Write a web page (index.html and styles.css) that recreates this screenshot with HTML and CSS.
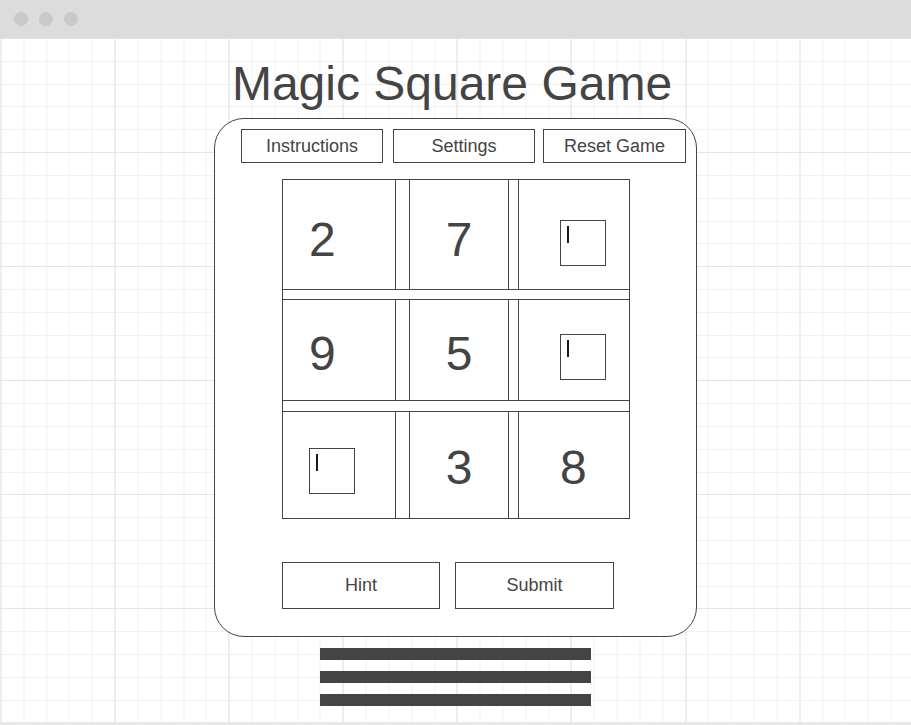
FILE: index.html
```html
<!DOCTYPE html>
<html lang="en">
<head>
<meta charset="utf-8">
<title>Magic Square Game</title>
<link rel="stylesheet" href="styles.css">
</head>
<body>
<div class="window">
  <div class="titlebar">
    <span class="dot"></span>
    <span class="dot"></span>
    <span class="dot"></span>
  </div>
  <div class="canvas">
    <h1 class="title">Magic Square Game</h1>
    <div class="panel">
      <div class="toolbar">
        <div class="btn btn-instructions">Instructions</div>
        <div class="btn btn-settings">Settings</div>
        <div class="btn btn-reset">Reset Game</div>
      </div>
      <div class="board">
        <div class="row row-1">
          <div class="cell cell-a"><span class="num">2</span></div>
          <div class="gap gap-a"></div>
          <div class="cell cell-b"><span class="num">7</span></div>
          <div class="gap gap-b"></div>
          <div class="cell cell-c"><span class="field"><span class="caret"></span></span></div>
        </div>
        <div class="row row-2">
          <div class="cell cell-a"><span class="num">9</span></div>
          <div class="gap gap-a"></div>
          <div class="cell cell-b"><span class="num">5</span></div>
          <div class="gap gap-b"></div>
          <div class="cell cell-c"><span class="field"><span class="caret"></span></span></div>
        </div>
        <div class="row row-3">
          <div class="cell cell-a"><span class="field"><span class="caret"></span></span></div>
          <div class="gap gap-a"></div>
          <div class="cell cell-b"><span class="num">3</span></div>
          <div class="gap gap-b"></div>
          <div class="cell cell-c"><span class="num">8</span></div>
        </div>
      </div>
      <div class="actions">
        <div class="btn btn-hint">Hint</div>
        <div class="btn btn-submit">Submit</div>
      </div>
    </div>
    <div class="menu-bars">
      <span class="bar"></span>
      <span class="bar"></span>
      <span class="bar"></span>
    </div>
  </div>
</div>
</body>
</html>
```

FILE: styles.css
```css
* {
  box-sizing: border-box;
}

html, body {
  margin: 0;
  padding: 0;
  background: #ffffff;
}

body {
  font-family: "Liberation Sans", Arial, sans-serif;
  color: #444444;
}

.window {
  width: 911px;
  height: 725px;
  display: flex;
  flex-direction: column;
  border-bottom: 3px solid #e8e8e8;
  overflow: hidden;
}

.titlebar {
  height: 38px;
  flex: 0 0 38px;
  background: #dcdcdc;
  display: flex;
  align-items: center;
  gap: 11px;
  padding-left: 14px;
}

.dot {
  width: 14px;
  height: 14px;
  border-radius: 50%;
  background: #c9c9c9;
}

.canvas {
  flex: 1;
  display: flex;
  flex-direction: column;
  align-items: center;
  background-color: #ffffff;
  background-image:
    repeating-linear-gradient(to right, #e4e4e4 0, #e4e4e4 1px, transparent 1px, transparent 114.1px),
    repeating-linear-gradient(to bottom, #e4e4e4 0, #e4e4e4 1px, transparent 1px, transparent 114.1px),
    repeating-linear-gradient(to right, #f1f1f1 0, #f1f1f1 1px, transparent 1px, transparent 22.82px),
    repeating-linear-gradient(to bottom, #f1f1f1 0, #f1f1f1 1px, transparent 1px, transparent 22.82px);
  background-position: 0.5px 0;
}

.title {
  margin: 18px 7px 7px 0;
  font-size: 48px;
  line-height: 55px;
  font-weight: normal;
  color: #444444;
}

.panel {
  width: 483px;
  border: 1px solid #444444;
  border-radius: 30px;
  background: #ffffff;
  padding: 10px 0 27px;
  display: flex;
  flex-direction: column;
}

.btn {
  border: 1px solid #444444;
  background: #ffffff;
  display: flex;
  align-items: center;
  justify-content: center;
  font-size: 18px;
  color: #444444;
}

.toolbar {
  display: flex;
  padding-left: 26px;
  height: 34px;
}

.btn-instructions {
  width: 142px;
  margin-right: 10px;
}

.btn-settings {
  width: 142px;
  margin-right: 8px;
}

.btn-reset {
  width: 143px;
}

.board {
  margin: 16px 0 0 67px;
  width: 348px;
  height: 340px;
  border: 1px solid #444444;
  display: flex;
  flex-direction: column;
}

.row {
  display: flex;
}

.row-1 {
  height: 110px;
  border-bottom: 1px solid #444444;
}

.row-2 {
  height: 102px;
  margin-top: 9px;
  border-top: 1px solid #444444;
  border-bottom: 1px solid #444444;
}

.row-3 {
  height: 107px;
  margin-top: 10px;
  border-top: 1px solid #444444;
}

.cell {
  display: flex;
  align-items: flex-start;
}

.row-1 .cell { padding-top: 36px; }
.row-2 .cell { padding-top: 30px; }
.row-3 .cell { padding-top: 32px; }

.cell-a {
  width: 113px;
  border-right: 1px solid #444444;
  padding-left: 26px;
}

.gap-a {
  width: 13px;
}

.cell-b {
  width: 100px;
  border-left: 1px solid #444444;
  border-right: 1px solid #444444;
  justify-content: center;
}

.gap-b {
  width: 9px;
}

.cell-c {
  flex: 1;
  border-left: 1px solid #444444;
  padding-left: 41px;
}

.num {
  font-size: 48px;
  line-height: 48px;
  color: #444444;
}

.field {
  display: block;
  width: 46px;
  height: 46px;
  margin-top: 4px;
  border: 1px solid #444444;
  background: #ffffff;
}

.caret {
  display: block;
  width: 2px;
  height: 17px;
  margin: 5px 0 0 6px;
  background: #1a1a1a;
}

.actions {
  display: flex;
  gap: 15px;
  margin: 43px 0 0 67px;
  height: 47px;
}

.btn-hint {
  width: 158px;
}

.btn-submit {
  width: 159px;
}

.menu-bars {
  margin-top: 11px;
  display: flex;
  flex-direction: column;
  gap: 11px;
}

.bar {
  display: block;
  width: 271px;
  height: 12px;
  background: #444444;
}
```
